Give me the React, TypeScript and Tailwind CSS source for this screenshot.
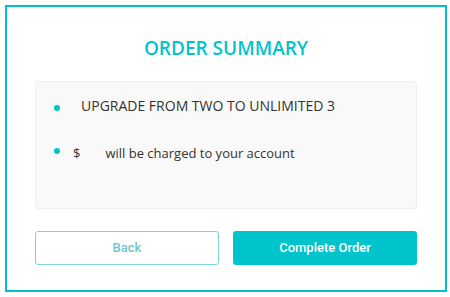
export default function App() {
  return (
    <div className="h-[297px] w-[450px] bg-white py-[5px] pl-[5px] pr-[3px]">
      <div className="flex h-full flex-col border-2 border-[#00c2cb] px-[28px] pt-[29px]">
        <h1 className="text-center font-['Open_Sans',sans-serif] text-[19px] font-semibold leading-[24px] text-[#00c4cc]">
          ORDER SUMMARY
        </h1>

        <div className="mt-[21px] h-[128px] rounded-[3px] border border-[#f0f0f0] bg-[#f9f9f9] pl-[18px] pt-[12px] font-['Open_Sans',sans-serif] text-[#333]">
          <ul className="flex flex-col gap-[23px]">
            <li className="flex items-center">
              <span className="mt-[4px] h-[6px] w-[6px] rounded-full bg-[#00c4cc]" />
              <span className="ml-[21px] text-[14px] leading-[24px]">UPGRADE FROM TWO TO UNLIMITED 3</span>
            </li>
            <li className="flex items-center">
              <span className="-mt-[4px] h-[6px] w-[6px] rounded-full bg-[#00c4cc]" />
              <span className="ml-[13px] text-[13px] leading-[24px]">$</span>
              <span className="ml-[25px] text-[13px] leading-[24px]">will be charged to your account</span>
            </li>
          </ul>
        </div>

        <div className="mt-[22px] grid grid-cols-2 gap-[14px] font-['Roboto',sans-serif] text-[13px] font-medium">
          <button className="h-[34px] rounded-[3px] border border-[#7fd4d9] bg-white text-[#6cc6cc]">Back</button>
          <button className="h-[34px] rounded-[3px] bg-[#00c4cc] text-white">Complete Order</button>
        </div>
      </div>
    </div>
  );
}
